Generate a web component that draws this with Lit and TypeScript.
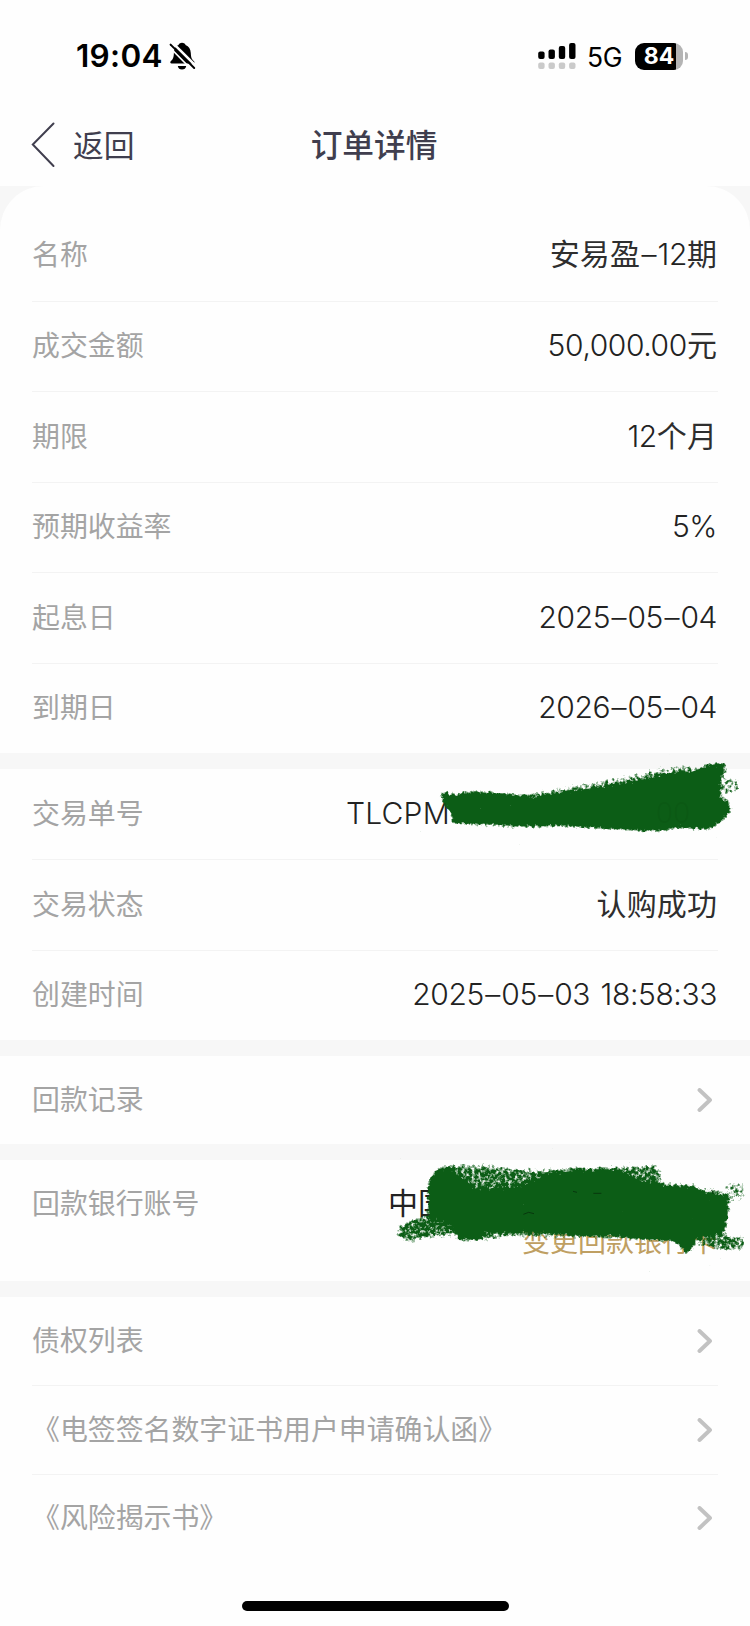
import { LitElement, html, svg, css, nothing } from "lit";
import { customElement, property } from "lit/decorators.js";

interface Row {
  label: string;
  value?: string;
  link?: boolean;
}

const summary: Row[] = [
  { label: "名称", value: "安易盈–12期" },
  { label: "成交金额", value: "50,000.00元" },
  { label: "期限", value: "12个月" },
  { label: "预期收益率", value: "5%" },
  { label: "起息日", value: "2025–05–04" },
  { label: "到期日", value: "2026–05–04" },
];

const documents: Row[] = [
  { label: "债权列表", link: true },
  { label: "《电签签名数字证书用户申请确认函》", link: true },
  { label: "《风险揭示书》", link: true },
];

/* Rough brush edge: the blurred silhouette is mixed with noise and thresholded. */
const brushFilter = (id: string, seed: number) => svg`
  <filter id=${id} x="-10%" y="-20%" width="120%" height="140%" color-interpolation-filters="sRGB">
    <feTurbulence type="fractalNoise" baseFrequency="0.1" numOctaves="3" seed=${seed} result="t"></feTurbulence>
    <feColorMatrix in="t" type="matrix" values="0 0 0 0 0  0 0 0 0 0  0 0 0 0 0  0 0 0 1 0" result="n"></feColorMatrix>
    <feGaussianBlur in="SourceAlpha" stdDeviation="6" result="b"></feGaussianBlur>
    <feComposite in="b" in2="n" operator="arithmetic" k1="0" k2="3.2" k3="3" k4="-2.6" result="m"></feComposite>
    <feFlood flood-color="#0c5d16"></feFlood>
    <feComposite in2="m" operator="in" result="c"></feComposite>
    <feGaussianBlur in="c" stdDeviation="1.5"></feGaussianBlur>
  </filter>`;

@customElement("status-bar")
export class StatusBar extends LitElement {
  static styles = css`
    :host { display: flex; justify-content: space-between; height: 104px; padding: 41px 62px 0 76px; box-sizing: border-box; color: #000; font-family: Inter, sans-serif; }
    .side { display: flex; align-items: center; height: 30px; }
    .time { font-size: 31.5px; font-weight: 600; line-height: 30px; width: 93px; letter-spacing: 0.3px; white-space: nowrap; }
    .net { font-size: 26.5px; font-weight: 400; line-height: 30px; width: 48px; margin-left: 11px; padding-top: 1px; letter-spacing: -0.3px; }
    .cell { display: block; }
    .battery { display: flex; align-items: center; }
    .body { width: 48px; height: 27px; border-radius: 9px; background: linear-gradient(90deg, #000 41px, #b4b4b4 41px); color: #fff; font-size: 23px; font-weight: 700; line-height: 27px; text-align: center; }
    .nub { width: 3px; height: 8px; margin-left: 2px; border-radius: 0 4px 4px 0; background: #b4b4b4; }
  `;
  render() {
    const heights = [7.5, 9.5, 13, 16];
    return html`
      <div class="side">
        <span class="time">19:04</span>
        <svg class="cell" width="27" height="28" viewBox="0 0 27 28">
          <path d="M13 .8c1.900 0 3.300 1 3.500 2.200 3.400 1.200 5.100 4.200 5.300 8 .2 4.600 1 6.400 3.200 8.300.9 1 .4 2.200-.8 2.200H2.600c-1.300 0-1.700-1.300-.9-2.200 2.400-2.100 3-3.700 3.200-8.300.2-3.800 1.400-6.800 4.700-8C9.800 1.800 11.200.8 13 .8z" fill="#000"></path>
          <path d="M8.800 23.900h8.400c-.3 2.300-2 3.600-4.200 3.600s-3.900-1.300-4.200-3.600z" fill="#000"></path>
          <path d="M4.200 1.400 27.500 24.500" stroke="#fff" stroke-width="2.600"></path>
          <path d="M0 4.600 22.500 27.500" stroke="#fff" stroke-width="1.600"></path>
          <path d="M1.600 2.600 25.200 26" stroke="#000" stroke-width="2" stroke-linecap="round"></path>
        </svg>
      </div>
      <div class="side">
        <svg class="cell" width="38" height="28" viewBox="0 0 38 28">
          ${heights.map((h, i) => svg`
            <rect x=${i * 10.3 + 0.2} y=${17 - h} width="6.400" height=${h} rx="2" fill="#000"></rect>
            <rect x=${i * 10.3 + 0.2} y="20.500" width="6.400" height="6.500" rx="2" fill="#cacaca"></rect>`)}
        </svg>
        <span class="net">5G</span>
        <div class="battery"><div class="body">84</div><div class="nub"></div></div>
      </div>`;
  }
}

@customElement("detail-row")
export class DetailRow extends LitElement {
  @property() label = "";
  @property() value = "";
  @property({ type: Boolean }) link = false;
  static styles = css`
    :host { display: flex; align-items: center; justify-content: space-between; box-sizing: border-box; margin: 0 32px; white-space: nowrap; }
    .label { font: 400 27.9px/40px "Noto Sans CJK SC", sans-serif; color: #a4a4a4; padding-bottom: 4px; }
    .value { font: 350 30px/40px Inter, "Noto Sans CJK SC", sans-serif; letter-spacing: -0.4px; word-spacing: 2.5px; color: #222; padding: 0 1px 2px 0; }
    .han { font-weight: 400; letter-spacing: 0.1px; color: #2e2e2e; }
    .dash { padding: 0 1.4px; }
    .arrow { margin-right: 5px; }
  `;
  private segments() {
    return (this.value.match(/[\u4e00-\u9fff]+|–|[^\u4e00-\u9fff–]+/g) ?? []).map((s) =>
      s === "–" ? html`<span class="dash">–</span>` : /[\u4e00-\u9fff]/.test(s) ? html`<span class="han">${s}</span>` : s
    );
  }
  render() {
    return html`
      <span class="label">${this.label}</span>
      ${this.value ? html`<span class="value">${this.segments()}</span>` : nothing}
      <slot></slot>
      ${this.link
        ? html`<svg class="arrow" width="16" height="24" viewBox="0 0 16 24"><path d="M2.500 2 13 12 2.500 22" fill="none" stroke="#c2c2c2" stroke-width="3.900" stroke-linecap="round" stroke-linejoin="round"></path></svg>`
        : nothing}`;
  }
}

@customElement("app-root")
export class AppRoot extends LitElement {
  static styles = css`
    :host { display: block; width: 750px; height: 1626px; overflow: hidden; background: #fefefe; }
    .nav { display: grid; grid-template-columns: 1fr auto 1fr; align-items: center; height: 82px; color: #403e4e; font-family: "Noto Sans CJK SC", sans-serif; }
    .back { display: flex; align-items: center; gap: 17px; padding-left: 31px; font-size: 30.8px; line-height: 44px; }
    .back span { padding-bottom: 2px; }
    .title { font-size: 31.7px; line-height: 44px; font-weight: 500; padding: 0 2px 4px 0; }
    .page { display: flex; flex-direction: column; gap: 16px; background: #f7f7f7; }
    .group { position: relative; background: #fefefe; }
    .first { padding-top: 24px; border-radius: 44px 44px 0 0; }
    .group detail-row + detail-row { border-top: 1.500px solid #f3f3f3; }
    .first detail-row { height: 90.5px; }
    .trade detail-row { height: 90.33px; }
    .single detail-row { height: 88px; }
    .docs { height: 304px; }
    .docs detail-row { height: 88.3px; }
    .account { height: 121px; }
    .account detail-row { height: 88px; }
    .masked { font: 350 30px/40px Inter, "Noto Sans CJK SC", sans-serif; color: #222; overflow: hidden; padding-bottom: 2px; }
    .serial { width: 372px; letter-spacing: 0.2px; }
    .bank { width: 330px; font-weight: 400; }
    .change { display: block; margin: -28px 32px 0; text-align: right; font: 400 28px/40px "Noto Sans CJK SC", sans-serif; color: #bf9f62; }
    .scribble { position: absolute; left: 375px; pointer-events: none; }
    .upper { top: -29px; }
    .lower { top: -20px; }
    .ghost { font: 300 84px Inter, sans-serif; }
    .home { width: 267px; height: 10px; border-radius: 5px; background: #000; margin: 0 auto; }
  `;

  private row(r: Row) {
    return html`<detail-row .label=${r.label} .value=${r.value ?? ""} .link=${!!r.link}></detail-row>`;
  }

  render() {
    return html`
      <status-bar></status-bar>
      <header class="nav">
        <div class="back">
          <svg width="25" height="46" viewBox="0 0 25 46"><path d="M22.500 1.500 1.800 22.500 22.500 44" fill="none" stroke="#403e4e" stroke-width="2" stroke-linecap="round"></path></svg>
          <span>返回</span>
        </div>
        <div class="title">订单详情</div>
      </header>
      <main class="page">
        <section class="group first">${summary.map((r) => this.row(r))}</section>
        <section class="group trade">
          <detail-row label="交易单号"><span class="masked serial">TLCPM</span></detail-row>
          ${this.row({ label: "交易状态", value: "认购成功" })}
          ${this.row({ label: "创建时间", value: "2025–05–03 18:58:33" })}
          <svg class="scribble upper" width="375" height="120" viewBox="0 0 1125 360">
            <defs>${brushFilter("brush-a", 4)}</defs>
            <g filter="url(#brush-a)">
              <path d="M194 154 236 164 300 154 380 160 480 170 560 160 650 146 760 128 860 108 950 94 1000 74 1050 68 1050 98 1036 112 1036 176 1062 180 1066 212 1046 238 1008 268 900 264 870 272 800 272 700 266 560 258 450 260 350 256 232 250 228 218 206 190z"></path>
              <path d="M440 162 560 142 650 126 760 106 860 82 950 72 950 110 760 146 560 180z" fill-opacity=".45"></path>
              <path d="M1040 112 1092 114 1092 156 1040 168z" fill-opacity=".44"></path>
            </g>
            <text class="ghost" x="842" y="250" fill="#06440d" fill-opacity=".16">00</text>
          </svg>
        </section>
        <section class="group single">${this.row({ label: "回款记录", link: true })}</section>
        <section class="group account">
          <detail-row label="回款银行账号"><span class="masked bank">中国</span></detail-row>
          <span class="change">变更回款银行卡</span>
          <svg class="scribble lower" width="375" height="160" viewBox="0 0 1125 480">
            <defs>${brushFilter("brush-b", 11)}</defs>
            <g filter="url(#brush-b)">
              <path d="M160 130 182 88 215 74 330 76 480 90 600 82 740 80 850 74 864 130 960 134 965 170 160 180z" fill-opacity=".61"></path>
              <path d="M160 124 184 92 225 86 250 110 300 150 430 146 500 110 600 92 720 92 790 124 880 140 960 142 1000 160 1060 166 1060 210 1050 276 960 290 958 318 934 342 900 304 780 296 640 284 500 272 330 272 320 294 250 298 236 262 160 226z"></path>
              <path d="M70 256 160 220 260 230 260 282 160 294 104 306 66 292z" fill-opacity=".64"></path>
              <path d="M240 240 620 250 700 294 400 290 320 302 250 302z" fill-opacity=".6"></path>
              <path d="M950 264 1040 270 1060 290 1108 288 1108 328 1050 334 960 308z" fill-opacity=".6"></path>
              <path d="M1046 130 1110 126 1108 184 1062 182z" fill-opacity=".43"></path>
              <path d="M970 146 1030 146 1050 170 970 172z" fill-opacity=".42"></path>
            </g>
            <path d="M1008 150q8 2 6 12M594 154l12 3M655 160h24M445 223l16-6 16 4" stroke="#06280a" stroke-width="3" stroke-opacity=".7" fill="none"></path>
          </svg>
        </section>
        <section class="group docs">${documents.map((r) => this.row(r))}</section>
      </main>
      <div class="home"></div>`;
  }
}
